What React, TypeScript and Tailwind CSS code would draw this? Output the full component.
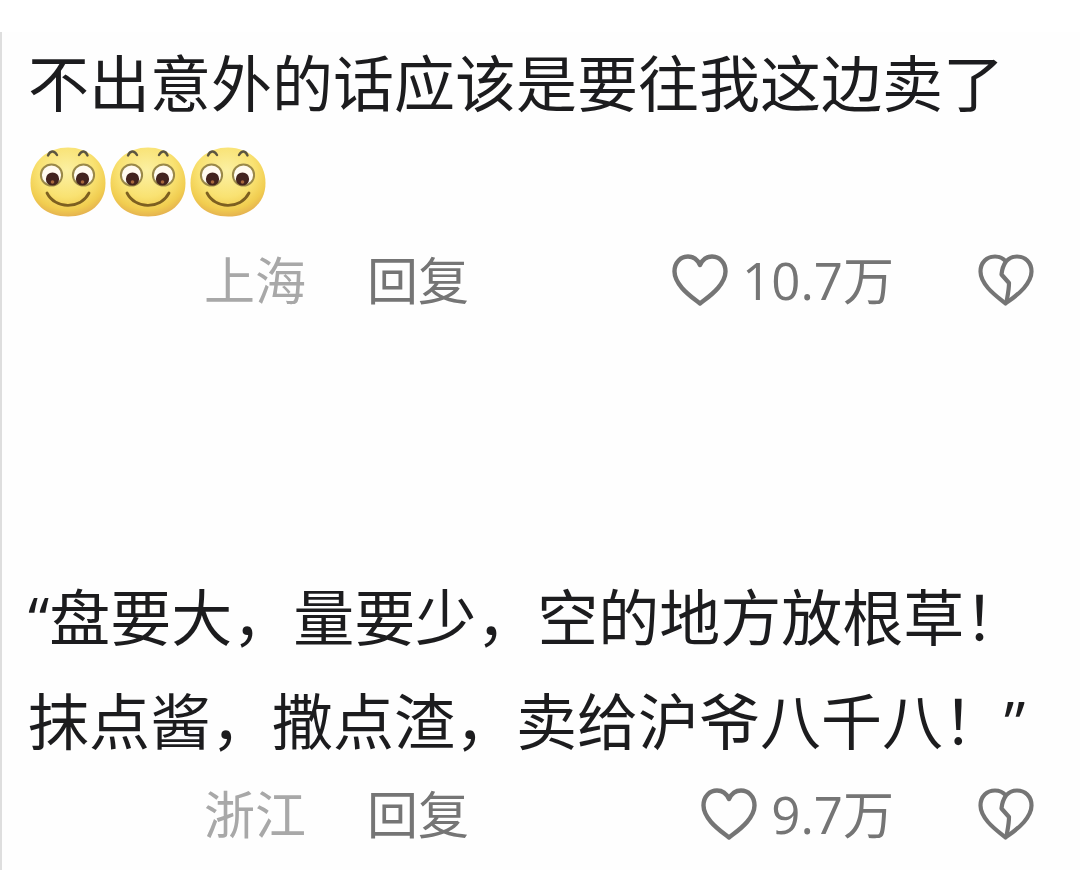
import React, { useState } from 'react';

interface Comment {
    id: number;
    lines: string[];
    emojis: number;
    region: string;
    likes: string;
}

const comments: Comment[] = [
    {
        id: 1,
        lines: ['不出意外的话应该是要往我这边卖了'],
        emojis: 3,
        region: '上海',
        likes: '10.7万',
    },
    {
        id: 2,
        lines: ['“盘要大，量要少，空的地方放根草！', '抹点酱，撒点渣，卖给沪爷八千八！”'],
        emojis: 0,
        region: '浙江',
        likes: '9.7万',
    },
];

const SmileFace: React.FC = () => (
    <svg viewBox="0 0 76 70" className="h-[70px] w-[76px]" aria-hidden="true">
        <defs>
            <radialGradient id="face" cx="0.48" cy="0.34" r="0.68">
                <stop offset="0" stopColor="#fbf0a4" />
                <stop offset="0.55" stopColor="#f9e272" />
                <stop offset="0.82" stopColor="#f1cd50" />
                <stop offset="1" stopColor="#e3ae50" />
            </radialGradient>
        </defs>
        <path
            d="M38 0.5 C58 0.5 75.5 14 75.5 36 C75.5 57 59 69.5 38 69.5 C17 69.5 0.5 57 0.5 36 C0.5 14 18 0.5 38 0.5Z"
            fill="url(#face)"
        />
        {/* eyebrows */}
        <g fill="none" stroke="#5b5540" strokeWidth="2.4" strokeLinecap="round">
            <path d="M18 8.5 C20 3.5 24 3 27 8" />
            <path d="M49 8 C52 3 55.5 3.5 57.5 8.5" />
        </g>
        {/* eyes */}
        <g fill="#fffaf0" stroke="#9a8848" strokeWidth="2">
            <circle cx="21.5" cy="28" r="10.6" />
            <circle cx="53.5" cy="28" r="10.6" />
        </g>
        <g fill="#43231e">
            <circle cx="22.5" cy="32" r="6.6" />
            <circle cx="52.5" cy="32" r="6.6" />
        </g>
        <g fill="#a8683c">
            <circle cx="22.5" cy="35" r="1.8" />
            <circle cx="52.5" cy="35" r="1.8" />
        </g>
        <path d="M17 46 C25 62 50 63 59 46" fill="none" stroke="#7d6020" strokeWidth="2.8" strokeLinecap="round" />
    </svg>
);

const HeartIcon: React.FC = () => (
    <svg
        viewBox="0 0 56 52"
        className="h-[52px] w-14"
        fill="none"
        stroke="currentColor"
        strokeWidth="4.4"
        strokeLinejoin="round"
        aria-hidden="true"
    >
        <path d="M28 49.5 C23 45.5 16 41 10 34 C5 28 2.5 23 2.5 17.5 C2.5 8 9 2.5 16 2.5 C21.5 2.5 25.5 5.5 28 11 C30.5 5.5 34.5 2.5 40 2.5 C47 2.5 53.5 8 53.5 17.5 C53.5 23 51 28 46 34 C40 41 33 45.5 28 49.5Z" />
    </svg>
);

const BrokenHeartIcon: React.FC = () => (
    <svg
        viewBox="0 0 56 52"
        className="h-[52px] w-14"
        fill="none"
        stroke="currentColor"
        strokeWidth="4.2"
        strokeLinejoin="round"
        aria-hidden="true"
    >
        <path d="M27.5 49.5 C23 45.5 16 41 10 34 C5 28 2.5 23 2.5 17.5 C2.5 8 9 2.5 17 2.5 C21.5 2.5 25 4 28 7.5 C31 4 34.5 2.5 39 2.5 C47 2.5 53.5 8 53.5 17.5 C53.5 23 51 28 46 34 C40 41 33 45.5 27.5 49.5Z" />
        <path d="M28 7.5 C25.5 11 24 15 23.5 20.5 L31 29 C31 36 29.5 42 28.5 48" />
    </svg>
);

const CommentItem: React.FC<{ comment: Comment }> = ({ comment }) => {
    const [liked, setLiked] = useState(false);
    const [disliked, setDisliked] = useState(false);

    return (
        <article>
            <p className="whitespace-nowrap text-[61px] leading-[104px] text-[#1c1c1e]">
                {comment.lines.map((line, idx) => (
                    <span key={idx} className="block">{line}</span>
                ))}
            </p>

            {comment.emojis > 0 && (
                <div className="flex h-[104px] items-center gap-1 pb-3 pl-0.5" role="img" aria-label="微笑">
                    {Array.from({ length: comment.emojis }, (_, idx) => (
                        <SmileFace key={idx} />
                    ))}
                </div>
            )}

            <div className="flex h-20 items-center pl-44 pr-[18px] text-[51px] leading-none text-[#757575]">
                <span className="text-[#a8a8a8]">{comment.region}</span>
                <button type="button" className="ml-[61px] cursor-pointer">回复</button>
                <button
                    type="button"
                    aria-pressed={liked}
                    onClick={() => setLiked(prev => !prev)}
                    className="ml-auto flex cursor-pointer items-center gap-3.5"
                >
                    <HeartIcon />
                    <span>{comment.likes}</span>
                </button>
                <button
                    type="button"
                    aria-label="不喜欢"
                    aria-pressed={disliked}
                    onClick={() => setDisliked(prev => !prev)}
                    className="ml-[84px] cursor-pointer"
                >
                    <BrokenHeartIcon />
                </button>
            </div>
        </article>
    );
};

const App: React.FC = () => {
    return (
        <div
            lang="zh-CN"
            className="flex min-h-screen flex-col bg-white pt-8 font-['Open_Sans','Noto_Sans_CJK_SC',sans-serif]"
        >
            <main className="flex grow flex-col gap-[246px] border-l-2 border-[#dedede] bg-[#fefefe] pl-[26px] pr-7">
                {comments.map(comment => (
                    <CommentItem key={comment.id} comment={comment} />
                ))}
            </main>
        </div>
    );
};

export default App;
